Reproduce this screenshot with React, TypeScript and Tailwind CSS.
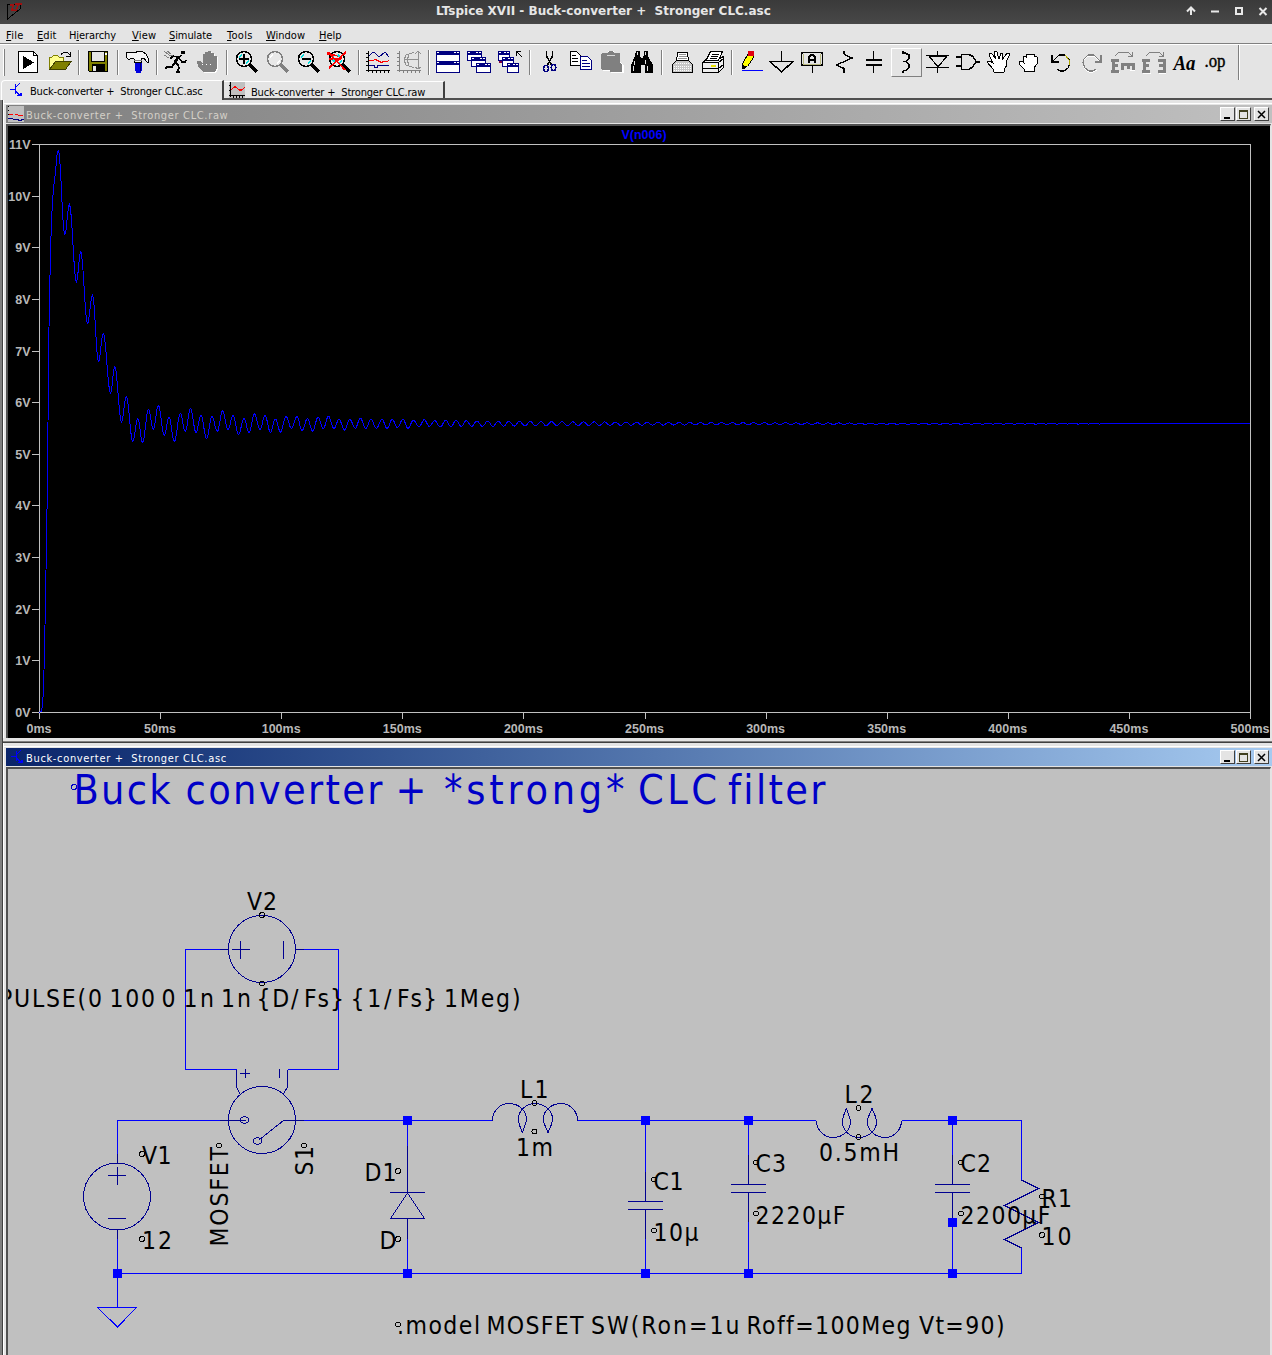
import type { ReactNode } from 'react';

const TAHOMA = "font-['DejaVu_Sans_Condensed','DejaVu_Sans',sans-serif]";

/* ---------- toolbar icons, each on a 24x24 grid ---------- */

const Lens = ({ c = '#000', children, hi = '#00e0e0' }: { c?: string; hi?: string; children?: ReactNode }) => (
  <>
    <circle cx="10" cy="9" r="7.5" fill="#e8e8e8" stroke={c} strokeWidth="1.6" />
    <path d="M5 7.5l3-3M12 13.5l3-3" stroke={hi} strokeWidth="1.6" fill="none" />
    <path d="M16 15l7 7" stroke={c} strokeWidth="3" />
    {children}
  </>
);

const Win = ({ x, y, w, h }: { x: number; y: number; w: number; h: number }) => (
  <>
    <rect x={x + 0.5} y={y + 0.5} width={w - 1} height={h - 1} fill="#fff" stroke="#000080" />
    <rect x={x} y={y} width={w} height={4} fill="#000080" />
    <path d={`M${x + 1} ${y + 1.5}h2M${x + w - 6} ${y + 1.5}h2M${x + w - 3} ${y + 1.5}h2`} stroke="#fff" />
  </>
);

const icons: Record<string, ReactNode> = {
  run: (
    <>
      <path d="M2.5 1.5h15l4 4v17h-19z" fill="#fff" stroke="#000" />
      <path d="M17.5 1.5v4h4" fill="none" stroke="#000" />
      <path d="M7 6l11 6.5L7 19z" fill="#000" />
    </>
  ),
  open: (
    <>
      <path d="M2.5 19V7.5h2l2-2h4l2 2h4v4H9L2.5 19z" fill="#ffff90" stroke="#808000" />
      <path d="M2.5 19.5L8.5 11.5H24L18.5 19.5z" fill="#808000" stroke="#404000" />
      <path d="M14 4.5l3-2.5h3l3 3M19 6.5h4.5V2" fill="none" stroke="#000" />
    </>
  ),
  save: (
    <>
      <path d="M2.5 1.5h19v20h-18l-1-1z" fill="#808000" stroke="#000" />
      <rect x="5.5" y="1.5" width="13" height="10" fill="#e4e4e4" stroke="#000" />
      <rect x="19" y="3" width="2" height="2" fill="#fff" />
      <rect x="6" y="14" width="13" height="8" fill="#000" />
      <rect x="7" y="16" width="3" height="5" fill="#e4e4e4" />
    </>
  ),
  hammer: (
    <>
      <rect x="10" y="12" width="7" height="9" fill="#0000e0" />
      <rect x="11" y="21" width="5" height="2" fill="#0000e0" />
      <path d="M15.5 12v9" stroke="#000060" />
      <path d="M1 3l3-1h3l3 1 3-2h4l4 3 2 4v4h-1l-3-4-3 1v3h-7V9L7 8 5 9H3L1 7z" fill="#f4f4f4" stroke="#000" />
      <path d="M9 10.5h8" stroke="#808080" />
    </>
  ),
  runner: (
    <>
      <rect x="17" y="1" width="4" height="3" fill="#000" />
      <path d="M17 5l-5 6-2 4M15 8l3 4h3l1-2M14 7l-5-1-3 3M11 12l3 3 1 3-2 4h3M10 13l-2 4-5 0-2 2" fill="none" stroke="#000" strokeWidth="1.5" />
      <path d="M15 6l-4 6" stroke="#000" strokeWidth="3" />
      <path d="M0 1l5 4 4 1M0 5l5 3M3 1l4 3" fill="none" stroke="#808080" />
    </>
  ),
  stop: (
    <>
      <path d="M8 22l-5-5-1-6h3l3 3V4h2V2h3V1h3v2h3v3h3v12l-2 4z" fill="#fff" transform="translate(1 1)" />
      <path d="M8 22l-5-5-1-6h3l3 3V4h2V2h3V1h3v2h3v3h3v12l-2 4z" fill="#808080" />
      <path d="M7 14.5h12" stroke="#fff" strokeDasharray="1 3" />
    </>
  ),
  zoomIn: (
    <Lens>
      <path d="M10 4v10M5 9h10" stroke="#000" strokeWidth="2" />
    </Lens>
  ),
  pan: <Lens c="#808080" hi="#fff" />,
  zoomOut: (
    <Lens>
      <path d="M5.5 9h9" stroke="#000" strokeWidth="2" />
    </Lens>
  ),
  zoomFit: (
    <Lens>
      <path d="M1 2l17 18M19 2L2 18M0 4l7 1 8 2M2 9h11l-6 4" stroke="#f00" strokeWidth="1.6" fill="none" />
      <path d="M11 5l2 2M6 10l2 2" stroke="#00e0e0" strokeWidth="1.5" />
    </Lens>
  ),
  plot: (
    <>
      <path d="M2.5 1v20.5M0 20.5h24M0 3.5h2M0 7.5h2M0 11.5h2M0 15.5h2M6.5 20v3M10.5 20v3M14.5 20v3M18.5 20v3M22.5 20v3" stroke="#000" fill="none" />
      <path d="M3 6l3-3 2-1 5 5 6-5 4 5" fill="none" stroke="#000080" />
      <path d="M3 10.5h4l2-1 3 1 3 2 4-1h2l2-1" fill="none" stroke="#f00" strokeWidth="1.2" />
      <path d="M3 15.5h5v2h3v-2h12" fill="none" stroke="#000080" />
    </>
  ),
  smith: (
    <>
      <path d="M2.5 1v20.5M0 20.5h24M0 3.5h2M0 7.5h2M0 11.5h2M0 15.5h2M6.5 20v3M10.5 20v3M14.5 20v3M18.5 20v3M22.5 20v3" stroke="#808080" fill="none" />
      <path d="M21.5 1v18M18 3.5l3-2 3 2M18 17l3 2 3-2M8 9.5h13M17 2.500L9 5l-2 5 2 5 8 2.500M12 5l-2 5 2 5" fill="none" stroke="#909090" />
    </>
  ),
  tile: (
    <>
      <Win x={0} y={1} w={24} h={11} />
      <Win x={0} y={11} w={24} h={12} />
    </>
  ),
  cascade: (
    <>
      <Win x={0} y={1} w={15} h={10} />
      <Win x={4} y={7} w={15} h={10} />
      <Win x={9} y={13} w={15} h={10} />
    </>
  ),
  closeAll: (
    <>
      <Win x={0} y={1} w={12} h={10} />
      <Win x={4} y={7} w={12} h={10} />
      <Win x={9} y={13} w={12} h={10} />
      <path d="M24 7l-5-5M18.5 6V1.5H23" fill="none" stroke="#000" strokeWidth="1.3" />
      <rect x="1" y="11" width="3" height="2" fill="#800040" />
    </>
  ),
  cut: (
    <>
      <path d="M9.5 1v5l5 9M15.5 1v5l-5 9" fill="none" stroke="#000" strokeWidth="1.6" />
      <ellipse cx="9" cy="18.5" rx="2.3" ry="3" fill="none" stroke="#000080" strokeWidth="1.5" />
      <ellipse cx="16.5" cy="17.5" rx="2.3" ry="3" fill="none" stroke="#000080" strokeWidth="1.5" />
    </>
  ),
  copy: (
    <>
      <path d="M2.5 1.5h6l4 4v10h-10z" fill="#fff" stroke="#000" />
      <path d="M4 5.5h4M4 8.5h6M4 11.5h6" stroke="#000" />
      <path d="M12.5 6.5h7l4 4v9h-11z" fill="#fff" stroke="#000080" />
      <path d="M14 10.5h5M14 13.5h8M14 16.5h8" stroke="#000080" />
    </>
  ),
  paste: (
    <>
      <path d="M3 4h5V1h6v3h6v8l4 3v8H11v-2H3z" fill="#fff" transform="translate(1 0)" />
      <path d="M2 4l1-1h5l2-2h3l2 2h5l1 1v8l2 3v7H11v-2H3l-1-1z" fill="#808080" />
      <path d="M8 5.5h8" stroke="#d8d8d8" />
    </>
  ),
  find: (
    <>
      <path d="M6 1h4v4l1 3h2l1-3V1h4v5l5 9v8h-8v-8h-4v8H1v-8l4-9z" fill="#000" />
      <path d="M4.5 11v4M3.5 16v5M15.5 10v4M17.5 16v5M7.5 2v3M15.5 2v3" stroke="#e4e4e4" />
    </>
  ),
  printSetup: (
    <>
      <path d="M7 11l2-8.5h9l2 8.5" fill="#fff" stroke="#000" />
      <path d="M3.5 14.5l4-4h12l4 4v8h-20z" fill="#c8c8c8" stroke="#000" />
      <path d="M10 4.5h7M10 6.5h8M9 8.5h9" stroke="#909090" />
      <path d="M5 16.5h17M5 18.5h17M5 20.5h17M7 13.5h13" stroke="#fff" strokeDasharray="1 1" />
    </>
  ),
  print: (
    <>
      <path d="M2.5 12.5l5-4h12l4-2v11l-5 5h-16z" fill="#eee" stroke="#000" />
      <path d="M6 10.5L10.5 1.5h12l-4 9z" fill="#fff" stroke="#000" />
      <path d="M12 4.5h7M11 6.5h7M10 8.5h7M2.5 12.5h16v10M18.5 12.5l5-4M2.5 18.5h16l5-4" stroke="#000" fill="none" />
      <rect x="11" y="15" width="5" height="2" fill="#e8e000" />
    </>
  ),
  pencil: (
    <>
      <path d="M3.5 18.5v-5l6-10h5v4l-6 9z" fill="#ff0" stroke="#000" />
      <path d="M3 14v5h2l3-2z" fill="#000" />
      <rect x="9" y="1" width="6" height="5" rx="1" fill="#e00010" />
      <path d="M3 20.5h21" stroke="#00f" />
    </>
  ),
  ground: <path d="M11.5 1v10M0 11.5h23L11.5 22z" fill="none" stroke="#000" strokeWidth="1.5" />,
  label: (
    <>
      <rect x="0.5" y="2.5" width="21" height="13" rx="2" fill="#e4e4e4" stroke="#000" strokeWidth="1.6" />
      <path d="M2.5 4v10.500h17V4" fill="none" stroke="#b8b880" />
      <path d="M8 13V7l2-2h2l2 2v6M8 10h6" fill="none" stroke="#000" strokeWidth="2" />
      <path d="M11.5 16v7" stroke="#000" strokeWidth="1.3" />
    </>
  ),
  resistor: <path d="M12 1v3l3 2 5 2L4.500 15l7.500 3.500V23" fill="none" stroke="#000" strokeWidth="1.4" />,
  capacitor: <path d="M10.5 1v9M3 10h16M3 15h16M10.5 15v8" fill="none" stroke="#000" strokeWidth="1.8" />,
  inductor: <path d="M9 1v2h2l4 2v3l-3 3.5H9M12 11.5l3 3v3l-3 3H9.5L9 23" fill="none" stroke="#000" strokeWidth="1.6" />,
  diode: (
    <>
      <path d="M4 6h18l-9 11z" fill="#e4e4e4" stroke="#000" strokeWidth="1.2" />
      <path d="M12.500 1v5M1 5.5h23M1 17.5h23M12.500 17v6" stroke="#000" strokeWidth="1.6" />
    </>
  ),
  gate: <path d="M0 7h6M0 16h6M5.5 4.5H13l4 2 3 5-3 5-4 3H5.5zM19 12h5" fill="none" stroke="#000" strokeWidth="1.5" />,
  move: (
    <path d="M7 22l-1-3-6-7v-1h3l3 2L2 5l1-2 2 1 4 5-2-7 1-1 2 1 2 7 2-6h2l-1 7 5-7h2v3l-3 6 1 3-3 5v2l-1 1z" fill="#fff" stroke="#000" />
  ),
  drag: (
    <path d="M6 21v-2l-5-5v-3h3l2 2-1-6 1-1 2 1V4h3l1 1 1-1h3v3l1-1 2 1v7l-3 4v3z" fill="#fff" stroke="#000" />
  ),
  undo: (
    <>
      <path d="M4 11l6-6h6l4 4 1 4-2 5-4 3h-4l-3-2" fill="none" stroke="#000" strokeWidth="1.2" />
      <path d="M16 5l4 5v5" fill="none" stroke="#b0a800" />
      <path d="M2.5 5v7h7" fill="none" stroke="#000" strokeWidth="2" />
    </>
  ),
  redo: (
    <>
      <path d="M20 12l-6-6H8l-4 4-1 4 2 5 4 3h4l4-2" fill="none" stroke="#fff" />
      <path d="M20 11l-6-6H8L4 9l-1 4 2 5 4 3h4l3-2" fill="none" stroke="#808080" strokeWidth="1.2" />
      <path d="M20.5 5v7H15" fill="none" stroke="#808080" strokeWidth="2" />
    </>
  ),
  mirror: (
    <>
      <path d="M4 6l4-4h9l4 4M17 6h4V2" fill="none" stroke="#808080" />
      <path d="M9 22.5H1M23.5 20.5h-5" stroke="#fff" />
      <path d="M2 9.5v12M0 10.5h8M2 15.5h5M0 21h8" fill="none" stroke="#808080" strokeWidth="3" />
      <path d="M10 14.5h14M11.5 14v6M17 14v5M22.5 14v6" fill="none" stroke="#808080" strokeWidth="3" />
    </>
  ),
  rotate: (
    <>
      <path d="M4 6l4-4h9l4 4M17 6h4V2" fill="none" stroke="#808080" />
      <path d="M9 23H1M24 23h-7" stroke="#fff" />
      <path d="M2 9.5v12M0 10.5h8M2 15.5h5M0 21h8M22 9.5v12M16 10.5h8M17 15.5h5M16 21h8" fill="none" stroke="#808080" strokeWidth="3" />
    </>
  ),
  text: (
    <text x="0.5" y="19.5" fontFamily="Liberation Serif, serif" fontStyle="italic" fontWeight="700" fontSize="21" textLength="22" lengthAdjust="spacingAndGlyphs">
      Aa
    </text>
  ),
  op: (
    <text x="0.5" y="16.5" fontFamily="Liberation Serif, serif" fontSize="19" stroke="#000" strokeWidth="0.4" textLength="21" lengthAdjust="spacingAndGlyphs">
      .op
    </text>
  ),
};

const toolGroups = [
  ['run', 'open'],
  ['save'],
  ['hammer'],
  ['runner', 'stop'],
  ['zoomIn', 'pan', 'zoomOut', 'zoomFit'],
  ['plot', 'smith'],
  ['tile', 'cascade', 'closeAll'],
  ['cut', 'copy', 'paste', 'find'],
  ['printSetup', 'print'],
  ['pencil', 'ground', 'label', 'resistor', 'capacitor', 'inductor', 'diode', 'gate', 'move', 'drag', 'undo', 'redo', 'mirror', 'rotate', 'text', 'op'],
];

const Transistor = () => (
  <svg width="16" height="16" viewBox="0 0 16 16" className="shrink-0" shapeRendering="crispEdges">
    <path d="M3 7.5h5M8.5 2v10M8.5 5.5L13 1M8.5 9l5 5M10 13.5h4V11" fill="none" stroke="#00f" strokeWidth="1.2" />
  </svg>
);

const RawIcon = () => (
  <svg width="16" height="16" viewBox="0 0 16 16" className="shrink-0" shapeRendering="crispEdges">
    <rect width="16" height="16" fill="#c0c0c0" />
    <path d="M1.5 0v14.5M0 13.5h16M0 3.5h2M0 8.5h2M4.5 13v3M7.5 13v3M10.5 13v3M13.5 13v3" stroke="#000" fill="none" />
    <path d="M2 8l3-3h2l3 3h3l3-3" fill="none" stroke="#f00" strokeWidth="1.3" />
  </svg>
);

const WaveIcon = () => (
  <svg width="16" height="16" viewBox="0 0 16 16" className="shrink-0" shapeRendering="crispEdges">
    <rect width="16" height="16" fill="#c0c0c0" />
    <path d="M0.5 0v1M0.5 4v1M0.5 8v1" stroke="#000" />
    <path d="M1 8.5h4M7 8.5h2l2 1h4" fill="none" stroke="#f00" />
    <path d="M0 12.5h4l2 1h4v1h3l1-1h2" fill="none" stroke="#000080" />
  </svg>
);

/* ---------- bars ---------- */

function TitleBar() {
  return (
    <div className="relative flex h-6 items-center justify-between bg-gradient-to-b from-[#3a3a3a] to-[#484848] pl-[6px]">
      <svg width="18" height="18" viewBox="0 0 18 18" shapeRendering="crispEdges">
        <path d="M1.5 1v15L14 6V1z" fill="none" stroke="#000" />
        <path d="M4 2h3l-1 5h3M9 1h7M12 2l-2 6" fill="none" stroke="#a01010" strokeWidth="1.6" />
      </svg>
      <span className="absolute left-[436px] top-0 text-[12px] leading-[22px] font-bold text-[#e6e6e6] font-['DejaVu_Sans',sans-serif] whitespace-pre tracking-[0.010px]">
        LTspice XVII - Buck-converter +  Stronger CLC.asc
      </span>
      <svg width="90" height="24" viewBox="1182 0 90 24" fill="none" stroke="#e8e8e8" strokeWidth="2">
        <path d="M1191 15V8M1187 11.5l4-4 4 4" />
        <path d="M1211 11.5h8" />
        <rect x="1236" y="8" width="6" height="6" />
        <path d="M1259.5 8l7 7M1266.5 8l-7 7" />
      </svg>
    </div>
  );
}

const menus: [string, string, string][] = [
  ['F', 'ile', 'w-[31px] tracking-[0.300px]'],
  ['E', 'dit', 'w-8 tracking-[0.100px]'],
  ['H|i', 'erarchy', 'w-[63px] tracking-[-0.100px]'],
  ['V', 'iew', 'w-[37px] tracking-[0.200px]'],
  ['S', 'imulate', 'w-[58px] tracking-[-0.100px]'],
  ['T', 'ools', 'w-[39px] tracking-[0.300px]'],
  ['W', 'indow', 'w-[53px]'],
  ['H', 'elp', 'w-10'],
];

function MenuBar() {
  return (
    <div className={`flex h-5 items-center border-b border-[#808080] bg-[#e4e4e4] pl-[6px] text-[11px] text-black ${TAHOMA}`}>
      {menus.map(([k, rest, w]) => {
        const [a, b] = k.split('|');
        return (
          <span key={k + rest} className={`${w} shrink-0 pt-[4px] leading-[15px] whitespace-nowrap`}>
            {b ? a : ''}
            <span className="underline underline-offset-1">{b ?? a}</span>
            {rest}
          </span>
        );
      })}
    </div>
  );
}

function Toolbar() {
  return (
    <div className="flex h-[37px] items-start border-t border-white bg-[#e4e4e4] pl-[3px]">
      <div className="mt-[4px] mr-[8px] h-[27px] w-[2px] border-r border-[#808080] bg-white" />
      {toolGroups.map((g, gi) => (
        <div key={gi} className="flex">
          {gi > 0 && (
            <div className="flex w-2 pt-[5px] pl-[3px]">
              <div className="h-[25px] w-[2px] border-l border-[#808080] bg-white" />
            </div>
          )}
          {g.map((name) => (
            <div
              key={name}
              className={
                name === 'inductor'
                  ? 'mt-[3px] h-[29px] w-[31px] border border-t-white border-l-white border-r-[#808080] border-b-[#808080] pt-px pl-[2px]'
                  : 'mt-[5px] w-[31px] pl-[3px]'
              }
            >
              <svg width="24" height="24" viewBox="0 0 24 24" className="overflow-visible" shapeRendering="crispEdges">
                {icons[name]}
              </svg>
            </div>
          ))}
        </div>
      ))}
      <div className="ml-[6px] h-[35px] w-[2px] border-l border-[#808080] bg-white" />
    </div>
  );
}

function Tabs() {
  return (
    <div className={`flex h-5 items-start bg-[#e4e4e4] text-[11px] tracking-[-0.170px] whitespace-pre text-black ${TAHOMA}`}>
      <div className="ml-px flex h-5 w-[223px] items-start rounded-tl-sm border-t border-l border-r-2 border-t-white border-l-white border-r-[#404040] pt-px pl-[5px]">
        <Transistor />
        <span className="ml-[7px] pt-[2px] leading-4">Buck-converter +  Stronger CLC.asc</span>
      </div>
      <div className="flex h-5 flex-1 border-b-2 border-[#505050]">
        <div className="mt-px flex w-[221px] items-start border-t border-r-2 border-t-white border-r-[#404040] pl-[5px]">
          <RawIcon />
          <span className="ml-[6px] pt-[3px] leading-4">Buck-converter +  Stronger CLC.raw</span>
        </div>
      </div>
    </div>
  );
}

const winBtn =
  'flex h-[14px] w-[15px] items-center justify-center border border-t-white border-l-white border-r-[#404040] border-b-[#404040] bg-[#e4e4e4]';

function MdiWindow({ title, active, icon, children }: { title: string; active?: boolean; icon: ReactNode; children: ReactNode }) {
  return (
    <section className="flex flex-col bg-[#e4e4e4] pt-[3px]">
      <div className="h-px bg-white" />
      <div
        className={`ml-[2px] mt-px flex h-[18px] items-center bg-gradient-to-r pr-[3px] ${
          active ? 'from-[#0a246a] to-[#a6caf0] text-white' : 'from-[#808080] to-[#c0c0c0] text-[#d4d0c8]'
        }`}
      >
        <span className="ml-[2px] w-[18px]">{icon}</span>
        <span className={`flex-1 pt-[3px] text-[11px] leading-4 tracking-[0.660px] whitespace-pre ${TAHOMA}`}>{title}</span>
        <div className={winBtn}>
          <div className="mt-[8px] mr-[2px] h-[2px] w-[6px] bg-black" />
        </div>
        <div className={`ml-px ${winBtn}`}>
          <div className="h-[9px] w-[9px] border border-t-2 border-[#404020]" />
        </div>
        <div className={`ml-[3px] ${winBtn}`}>
          <svg width="9" height="9" viewBox="0 0 9 9">
            <path d="M1 1l7 7M8 1L1 8" stroke="#000" strokeWidth="1.5" />
          </svg>
        </div>
      </div>
      <div className="ml-[2px] mr-px mt-px border-t-2 border-l-2 border-t-[#505050] border-l-[#505050] border-r border-r-[#e4e4e4]">
        {children}
      </div>
    </section>
  );
}

/* ---------- waveform ---------- */

const extrema: [number, number][] = [
  [58.3, 150], [64.8, 234.5], [69.4, 204.5], [76.4, 282], [80.7, 251.5], [87.5, 323.5], [92.5, 295], [98.5, 361.5],
  [103.3, 333.5], [110.5, 393], [114.8, 366.5], [121.5, 422], [126.3, 396.5], [132.8, 441.5], [137.8, 418.5],
  [142.5, 442.5], [148.5, 409.5], [153.3, 429.5], [158.3, 405.5], [164.3, 435.5], [169, 417], [174.3, 441.5],
  [180.3, 413.5], [185.3, 431.5], [190.5, 408.5], [196, 432.5], [201, 415], [206.5, 438.5], [212, 416.5],
  [217.3, 431.5], [222.5, 411], [228, 429.5], [233, 415.5], [238.5, 434.5], [244, 418.5], [249, 432.5],
  [254.5, 414], [260, 429.5], [265, 415.5], [270.5, 432.5], [275.3, 419], [280.5, 432], [286, 416.5],
  [291.5, 428.5], [297, 416.5], [302, 430.5], [307.5, 418.5], [312.6, 431], [318, 417.3], [323.3, 428.6],
  [328.4, 416.3], [334, 428.6], [339, 419.3], [344.5, 430], [349.7, 419.3], [355.3, 428.3], [360.3, 418],
  [365.7, 428.6], [371, 419.3], [376.3, 428.3], [382, 419.3], [387, 428.5], [392.3, 419.3], [397.3, 427.5],
  [403, 419.3], [408, 428.3], [413.3, 420.3], [419, 426.7], [424.3, 419.7], [429.3, 426.3], [434.7, 420.7],
  [440.3, 427], [445.7, 420.3], [451, 426.7], [456, 420.3], [461.3, 426.3], [466.3, 420.5], [471.7, 426.3],
];

function buildWave() {
  let d = 'M39.5 712.5L41.5 711L42.5 705L43.5 690L44.5 650L45.5 600L46.5 540L47.5 480L48 424L48.5 356L49.5 298L50.5 253L51.5 220L52.5 202L53.5 189L55 176L56 166L57 155';
  const pts = [...extrema];
  for (let x = 477, i = 0; x < 1240; x += 5.32, i++) {
    const amp = 2.7 * Math.exp(-(x - 477) / 290);
    pts.push([x, 423.7 + (i % 2 ? amp : -amp)]);
  }
  for (let i = 0; i < pts.length - 1; i++) {
    const [x0, y0] = pts[i];
    const [x1, y1] = pts[i + 1];
    for (let k = 0; k < 8; k++) {
      const t = k / 8;
      d += `L${(x0 + (x1 - x0) * t).toFixed(2)} ${(y0 + ((y1 - y0) * (1 - Math.cos(Math.PI * t))) / 2).toFixed(2)}`;
    }
  }
  return d + 'L1250 423.5';
}

const wave = buildWave();

function Plot() {
  return (
    <svg width="1262" height="612" viewBox="8 126 1262 612" className="block bg-black">
      <g stroke="#c0c0c0" fill="none" shapeRendering="crispEdges">
        <rect x="39.5" y="144.5" width="1211" height="568" />
        {Array.from({ length: 12 }, (_, i) => (
          <path key={i} d={`M32 ${Math.round(144 + i * 51.64) + 0.5}h7`} />
        ))}
        {Array.from({ length: 11 }, (_, i) => (
          <path key={i} d={`M${Math.round(39 + i * 121.1) + 0.5} 713v6`} />
        ))}
      </g>
      <g fill="#b8b8b8" fontFamily="Liberation Sans, sans-serif" fontWeight="700" fontSize="12.5">
        {Array.from({ length: 12 }, (_, i) => (
          <text key={i} x="30.5" y={Math.round(149 + i * 51.64)} textAnchor="end">
            {11 - i}V
          </text>
        ))}
        {Array.from({ length: 11 }, (_, i) => (
          <text key={i} x={39 + i * 121.1} y="733" textAnchor="middle">
            {i * 50}ms
          </text>
        ))}
        <text x="644" y="139" textAnchor="middle" fill="#00f">
          V(n006)
        </text>
      </g>
      <path d={wave} fill="none" stroke="#00f" shapeRendering="crispEdges" />
    </svg>
  );
}

/* ---------- schematic ---------- */

type Run = [text: string, x: number, width: number];

/* each label is a baseline and the words set on it */
const labels: [number, Run[]][] = [
  [910, [['V2', 247, 30]]],
  [1164, [['V1', 142, 29.5]]],
  [1249, [['12', 142, 30]]],
  [1181, [['D1', 364.5, 32]]],
  [1249, [['D', 379.5, 18]]],
  [1098, [['L1', 520, 28.5]]],
  [1156, [['1m', 516, 37]]],
  [1190, [['C1', 653.5, 30]]],
  [1241, [['10µ', 653.5, 45]]],
  [1172, [['C3', 755.5, 30.5]]],
  [1224, [['2220µF', 755.5, 90]]],
  [1103, [['L2', 844.5, 29]]],
  [1161, [['0.5mH', 819, 80]]],
  [1172, [['C2', 960.5, 30.5]]],
  [1224, [['2200µF', 960.5, 90]]],
  [1207, [['R1', 1041.5, 30.5]]],
  [1245, [['10', 1041.5, 30]]],
  [
    1007,
    [
      ['PULSE(0', -1, 103],
      ['100', 109.5, 45.5],
      ['0', 161.5, 14.5],
      ['1n', 183.5, 30.5],
      ['1n', 221, 30],
      ['{D/', 256.5, 42],
      ['Fs}', 304, 40],
      ['{1/', 350.5, 41],
      ['Fs}', 397, 40],
      ['1Meg)', 444, 76.5],
    ],
  ],
  [
    1334,
    [
      ['.model', 397, 83],
      ['MOSFET', 486.5, 97],
      ['SW(Ron=1u', 591, 148.5],
      ['Roff=100Meg', 746.5, 164],
      ['Vt=90)', 919, 85.5],
    ],
  ],
];

const heading: Run[] = [
  ['Buck', 73.5, 97],
  ['converter', 185.5, 197],
  ['+', 395.5, 32],
  ['*strong*', 444, 180.5],
  ['CLC', 638, 79],
  ['filter', 728, 97.5],
];

const anchors: [number, number][] = [
  [262, 915], [262, 983.5], [142, 1154], [142, 1239], [219, 1145.5], [304, 1145.5], [398, 1171], [398, 1239],
  [534.5, 1103], [534.5, 1131.5], [654, 1179.5], [654, 1230.5], [756, 1162.5], [756, 1213.5], [858.5, 1108],
  [858.5, 1137], [961, 1162.5], [961, 1213.5], [1042, 1196.5], [1042, 1235], [398, 1324.5],
];

const nodes: [number, number][] = [
  [407, 1120], [645, 1120], [748, 1120], [952, 1120], [117, 1273], [407, 1273], [645, 1273], [748, 1273], [952, 1273], [952, 1222],
];

const coil =
  'M492.5 1120.5C492.5 1110 501 1103.5 509 1103.5C520 1103.5 526.5 1112 526.5 1119C526.5 1125 523 1128 522.5 1133C521 1128 518.5 1126 518.5 1119C518.5 1110 527 1103.5 534.5 1103.5C545 1103.5 552.5 1111 552.5 1119C552.5 1126 549 1128 548 1133C547 1128 543.5 1126 543.5 1119C543.5 1110 552 1103.5 561 1103.5C570 1103.5 577.5 1111 577.5 1120.5';

function Schematic() {
  return (
    <svg width="1262" height="586" viewBox="8 769 1262 586" className="block bg-[#c0c0c0]">
      <g fill="none" stroke="#00f" shapeRendering="crispEdges">
        <path d="M220 949.5H185.5V1069.5H236.5M304 949.5H338.5V1069.5H287.5" />
        <path d="M117.5 1155V1120.5H220M304 1120.5H492M578 1120.5H816M902 1120.5H1021.5V1180" />
        <path d="M117.5 1239V1307M117.5 1273.5H1021.5V1248M407.5 1120V1273M645.5 1120V1273M748.5 1120V1273M952.5 1120V1273" />
        <path d="M97.5 1307.5H136.5L117.5 1327z" />
      </g>
      <g fill="none" stroke="#000090" shapeRendering="crispEdges">
        <circle cx="262" cy="949" r="33.5" />
        <circle cx="262" cy="1120" r="33.5" />
        <circle cx="117" cy="1196.5" r="33.5" />
        <path d="M220 949.5h8M296 949.5h8M232 949.5h18M240.5 941v18M283.5 941v18" />
        <path d="M117.5 1154v9M117.5 1230v9M108 1175.5h18M117.5 1167v18M108 1218.5h18" />
        <path d="M236.5 1069.5V1087L240 1094M287.5 1069.5V1087L283.5 1094M240 1073.5h10M245.5 1069v9M279.5 1069v9" />
        <path d="M220 1120.5h26M304 1120.5H283.5L259 1140" />
        <ellipse cx="244.5" cy="1120" rx="4" ry="3.3" />
        <ellipse cx="257.5" cy="1141" rx="4" ry="3.3" />
        <path d="M407.5 1146v46M407.5 1218v21M390 1192.5h35M407.5 1193L390.5 1218.5H424.5z" />
        <path d={coil} />
        <path d={coil} transform="matrix(1 0 0 -1 324 2241)" />
        <path d="M1021.5 1180L1038.5 1188.5L1004.5 1205.5L1038.5 1222.5L1004.5 1239.5L1021.5 1248" />
      </g>
      {/* capacitors: gap, leads and plates */}
      {[
        [645, 1201],
        [748, 1184],
        [952, 1184],
      ].map(([x, y]) => (
        <g key={x} shapeRendering="crispEdges">
          <rect x={x} y={y + 1} width="1" height="8" fill="#c0c0c0" />
          <path d={`M${x + 0.5} ${y - 29}v29M${x + 0.5} ${y + 9}v29M${x - 17} ${y + 0.5}h35M${x - 17} ${y + 8.5}h35`} stroke="#000090" />
        </g>
      ))}
      <rect x="407" y="1194" width="1" height="24" fill="#c0c0c0" />
      {nodes.map(([x, y]) => (
        <rect key={`${x}-${y}`} x={x - 4} y={y - 4} width="9" height="9" fill="#00f" />
      ))}
      <g fill="none" stroke="#000" strokeWidth="1" shapeRendering="crispEdges">
        {anchors.map(([x, y]) => (
          <circle key={`${x}-${y}`} cx={x} cy={y} r="2.5" />
        ))}
        <circle cx="74" cy="787" r="2.5" stroke="#0000c8" />
      </g>
      <g fontFamily="'DejaVu Sans Condensed', 'DejaVu Sans', sans-serif" fontSize="24.5" style={{ fontVariantLigatures: 'none' }}>
        {labels.map(([y, runs]) =>
          runs.map(([t, x, w]) => (
            <text key={`${x}-${y}`} x={x} y={y} textLength={w}>
              {t}
            </text>
          )),
        )}
        <text transform="translate(228 1246.5) rotate(-90)" textLength="99.5">
          MOSFET
        </text>
        <text transform="translate(313 1175.500) rotate(-90)" textLength="29.5">
          S1
        </text>
        <g fontSize="41" fill="#0000c8">
          {heading.map(([t, x, w]) => (
            <text key={x} x={x} y="804" textLength={w}>
              {t}
            </text>
          ))}
        </g>
      </g>
    </svg>
  );
}

export default function App() {
  return (
    <div className="flex h-[1355px] w-[1272px] flex-col overflow-hidden bg-[#e4e4e4]">
      <TitleBar />
      <MenuBar />
      <Toolbar />
      <Tabs />
      <div className="flex flex-1 bg-[#808080] pl-[2px]">
        <div className="flex-1 border-l border-[#404040] bg-white pl-px">
          <MdiWindow title="Buck-converter +  Stronger CLC.raw" icon={<WaveIcon />}>
            <Plot />
          </MdiWindow>
          <div className="-ml-px h-[3px] bg-[#e4e4e4]" />
          <div className="-ml-px h-[2px] border-t border-[#808080] bg-[#404040]" />
          <MdiWindow title="Buck-converter +  Stronger CLC.asc" active icon={<Transistor />}>
            <Schematic />
          </MdiWindow>
        </div>
      </div>
    </div>
  );
}
